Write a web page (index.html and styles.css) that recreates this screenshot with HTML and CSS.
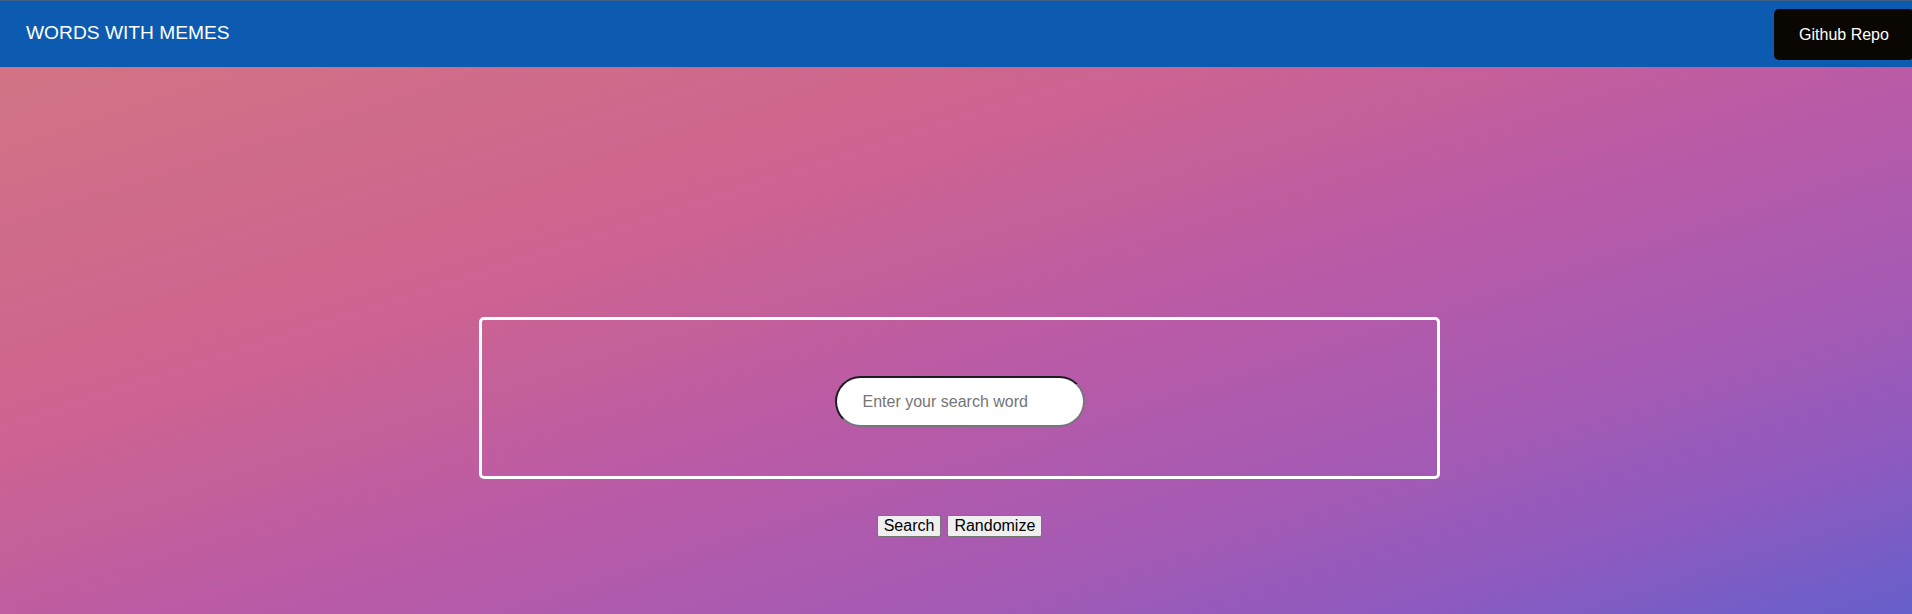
FILE: index.html
```html
<!DOCTYPE html>
<html lang="en">
<head>
<meta charset="utf-8">
<title>Words With Memes</title>
<link rel="stylesheet" href="styles.css">
</head>
<body>
<header class="navbar">
  <div class="brand">WORDS WITH MEMES</div>
  <button class="repo-btn">Github Repo</button>
</header>
<main class="main">
  <div class="search-box">
    <input class="search-input" type="text" placeholder="Enter your search word">
  </div>
  <div class="actions">
    <button class="btn">Search</button>
    <button class="btn">Randomize</button>
  </div>
</main>
</body>
</html>
```

FILE: styles.css
```css
html, body {
  margin: 0;
  padding: 0;
}
body {
  min-height: 100vh;
  font-family: "Liberation Sans", Arial, sans-serif;
  background: linear-gradient(to bottom right,
    #d37682 0%,
    #cd6391 36%,
    #b85aa8 58%,
    #a35ab5 75%,
    #8f5abf 86%,
    #665fcb 100%);
  overflow: hidden;
}
.navbar {
  height: 66px;
  border-top: 1px solid #3f5f86;
  background: #0c5bb0;
  display: flex;
  align-items: center;
  justify-content: space-between;
  padding-left: 26px;
}
.brand {
  color: #ffffff;
  font-size: 19.2px;
  line-height: 22px;
  margin-top: -3px;
}
.repo-btn {
  height: 51px;
  width: 140px;
  margin-right: -2px;
  background: #0a0703;
  color: #ffffff;
  border: none;
  border-radius: 5px;
  font-family: "Liberation Sans", Arial, sans-serif;
  font-size: 16px;
  padding: 0 25px;
  margin-top: 1px;
}
.main {
  display: flex;
  flex-direction: column;
  align-items: center;
  padding-top: 250px;
  padding-left: 7px;
}
.search-box {
  width: 955px;
  border: 3px solid #ffffff;
  border-radius: 5px;
  padding: 56px 0 49px;
  display: flex;
  justify-content: center;
}
.search-input {
  box-sizing: border-box;
  width: 250px;
  height: 51px;
  border-radius: 26px;
  border: 2px solid;
  border-color: #1f1a22 #7a7480 #7a7480 #1f1a22;
  background: #ffffff;
  padding: 0 20px 0 26px;
  font-family: "Liberation Sans", Arial, sans-serif;
  font-size: 16px;
  outline: none;
}
.search-input::placeholder {
  color: #757575;
}
.actions {
  margin-top: 36px;
  display: flex;
  gap: 6px;
}
.btn {
  background: #efefef;
  border: 1px solid #767676;
  border-radius: 2px;
  font-family: "Liberation Sans", Arial, sans-serif;
  font-size: 16px;
  line-height: 18px;
  padding: 1px 6px;
  color: #000000;
}
```
